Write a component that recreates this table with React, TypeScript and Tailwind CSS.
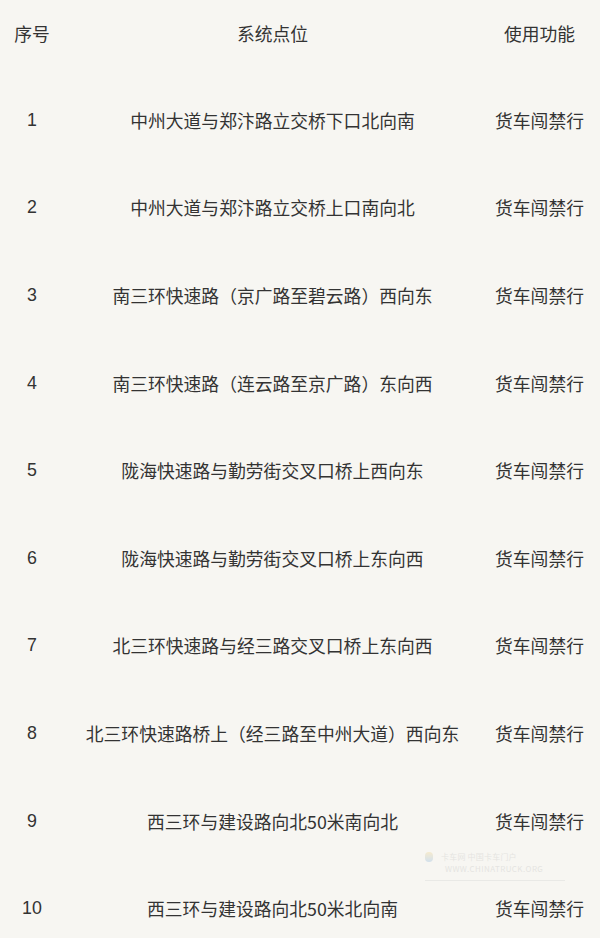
import React from "react";

const rows: [string, string, string][] = [
  ["1", "中州大道与郑汴路立交桥下口北向南", "货车闯禁行"],
  ["2", "中州大道与郑汴路立交桥上口南向北", "货车闯禁行"],
  ["3", "南三环快速路（京广路至碧云路）西向东", "货车闯禁行"],
  ["4", "南三环快速路（连云路至京广路）东向西", "货车闯禁行"],
  ["5", "陇海快速路与勤劳街交叉口桥上西向东", "货车闯禁行"],
  ["6", "陇海快速路与勤劳街交叉口桥上东向西", "货车闯禁行"],
  ["7", "北三环快速路与经三路交叉口桥上东向西", "货车闯禁行"],
  ["8", "北三环快速路桥上（经三路至中州大道）西向东", "货车闯禁行"],
  ["9", "西三环与建设路向北50米南向北", "货车闯禁行"],
  ["10", "西三环与建设路向北50米北向南", "货车闯禁行"],
];

export default function App() {
  return (
    <div
      className="relative w-[600px] h-[938px] overflow-hidden bg-[#f7f6f2] text-[#333333] text-[17.8px] leading-[24px]"
      style={{ fontFamily: '"Microsoft YaHei", "Noto Sans CJK SC", "Noto Sans", sans-serif' }}
    >
      <div className="grid grid-cols-[64px_417px_117px] h-[76px] pt-[21px]">
        <div className="text-center">序号</div>
        <div className="text-center">系统点位</div>
        <div className="text-center">使用功能</div>
      </div>
      {rows.map((r) => (
        <div key={r[0]} className="grid grid-cols-[64px_417px_117px] h-[87.6px] items-center">
          <div className="text-center" style={{ fontFamily: '"Liberation Sans", "Noto Sans CJK SC", sans-serif' }}>
            {r[0]}
          </div>
          <div className="text-center whitespace-nowrap">{r[1]}</div>
          <div className="text-center">{r[2]}</div>
        </div>
      ))}
      <div className="absolute left-[425px] top-[852px] flex flex-col items-start gap-[2px] opacity-30 pointer-events-none">
        <div className="flex items-center gap-2">
          <div className="w-[8px] h-[10px] rounded-sm bg-gradient-to-b from-[#f3d27a] to-[#7fb0e0]" />
          <div className="text-[8px] leading-[10px] text-[#bbbbbb] tracking-wide">卡车网 中国卡车门户</div>
        </div>
        <div className="text-[8px] leading-[10px] text-[#bbbbbb] pl-[20px] tracking-wider">WWW.CHINATRUCK.ORG</div>
        <div className="w-[140px] h-px bg-[#cccccc] mt-[4px]" />
      </div>
    </div>
  );
}
